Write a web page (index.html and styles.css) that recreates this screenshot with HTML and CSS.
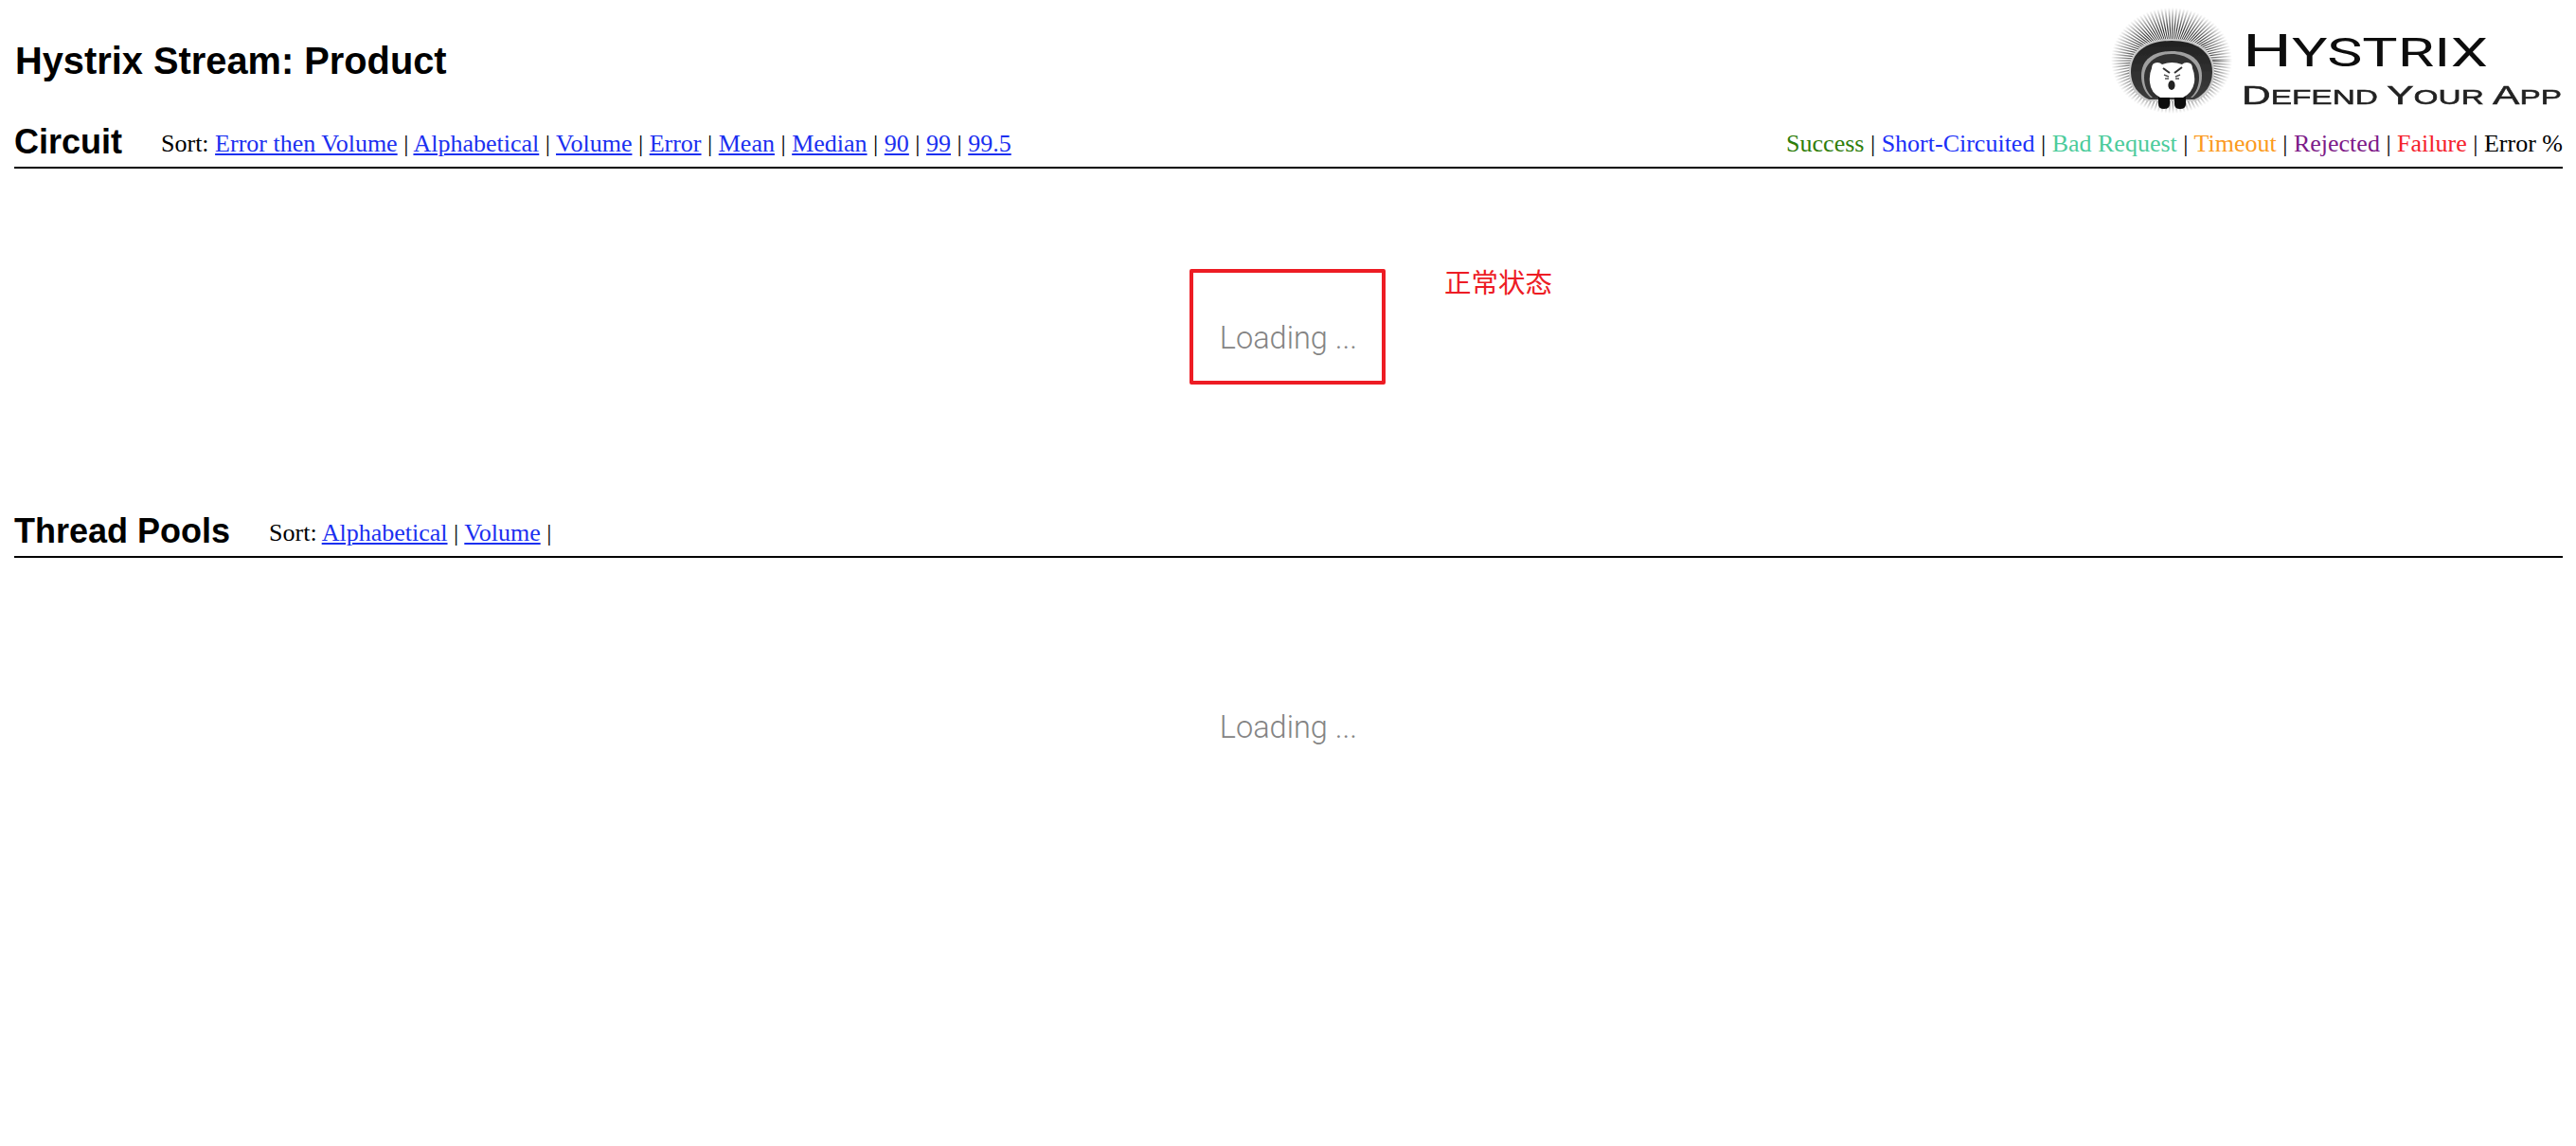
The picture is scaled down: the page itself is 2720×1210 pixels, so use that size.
FILE: index.html
```html
<!DOCTYPE html>
<html lang="en">
<head>
<meta charset="utf-8">
<title>Hystrix Stream: Product</title>
<link rel="stylesheet" href="styles.css">
</head>
<body>
<header class="page-header">
  <h1 class="title">Hystrix Stream: Product</h1>
  <svg class="logo" viewBox="2220 0 486 122" width="486" height="122" role="img" aria-label="Hystrix logo">
    <defs>
      <radialGradient id="fade" gradientUnits="userSpaceOnUse" cx="2293" cy="64" r="64">
        <stop offset="0.6" stop-color="#333"/>
        <stop offset="0.8" stop-color="#999"/>
        <stop offset="1" stop-color="#fff"/>
      </radialGradient>
      <linearGradient id="band" x1="0" y1="0" x2="0" y2="1">
        <stop offset="0" stop-color="#222"/>
        <stop offset="1" stop-color="#3c3c3c"/>
      </linearGradient>
      <filter id="soft" x="-50%" y="-50%" width="200%" height="200%"><feGaussianBlur stdDeviation="0.65"/></filter>
      <filter id="softer" x="-5%" y="-20%" width="110%" height="140%"><feGaussianBlur stdDeviation="0.45"/></filter>
    </defs>
    <g filter="url(#soft)">
      <circle class="spikes" cx="2293" cy="64" r="44" stroke="url(#fade)"/>
      <path class="ring-edge" d="M2248 76C2248 52 2266 41 2293 41S2338 52 2338 76C2338 92 2330 102 2318 107H2268C2256 102 2248 92 2248 76Z"/>
      <path class="ring-dark" d="M2250 76C2250 54 2268 43 2293 43S2336 54 2336 76C2336 90 2328 100 2317 105H2269C2258 100 2250 90 2250 76Z" fill="url(#band)"/>
      <path class="ring-mid" d="M2261 80C2261 62 2275 54 2293 54S2325 62 2325 80C2325 90 2321 98 2315 103H2271C2265 98 2261 90 2261 80Z"/>
      <path class="ring-inner" d="M2264 82C2264 66 2278 57 2293 57S2322 66 2322 82C2322 90 2319 98 2313 103H2273C2267 98 2264 90 2264 82Z"/>
      <path class="foot" d="M2279 100H2291V110Q2291 115 2285 115T2279 110ZM2296 100H2308V110Q2308 115 2302 115T2296 110Z"/>
      <path class="head" d="M2272 72Q2272 66 2278 66Q2281 66 2283 68Q2293 64 2304 68Q2306 66 2309 66Q2315 66 2315 72Q2318 79 2317 87Q2315 98 2305 103H2281Q2271 98 2270 87Q2269 79 2272 72Z"/>
      <path class="brow" d="M2284 72L2291 77M2304 71L2296 77"/>
      <path class="eye" d="M2285 79L2290 81M2302 79L2297 81M2286 83L2290 83M2301 83L2297 83"/>
      <ellipse class="mouth" cx="2293" cy="90" rx="3.6" ry="5"/>
    </g>
    <g filter="url(#softer)">
      <text class="logo-name" x="2368" y="70" textLength="259" lengthAdjust="spacingAndGlyphs"><tspan class="logo-name-cap">H</tspan>YSTRIX</text>
      <text class="logo-tag" x="2367" y="110" textLength="338" lengthAdjust="spacingAndGlyphs"><tspan class="logo-tag-cap">D</tspan>EFEND <tspan class="logo-tag-cap">Y</tspan>OUR <tspan class="logo-tag-cap">A</tspan>PP</text>
    </g>
  </svg>
</header>

<section class="section section-circuit">
  <div class="section-bar">
    <h2 class="section-title">Circuit</h2>
    <div class="sort">Sort: <a href="#">Error then Volume</a> | <a href="#">Alphabetical</a> | <a href="#">Volume</a> | <a href="#">Error</a> | <a href="#">Mean</a> | <a href="#">Median</a> | <a href="#">90</a> | <a href="#">99</a> | <a href="#">99.5</a></div>
    <div class="legend"><span class="c-success">Success</span> | <span class="c-short">Short-Circuited</span> | <span class="c-bad">Bad Request</span> | <span class="c-timeout">Timeout</span> | <span class="c-rejected">Rejected</span> | <span class="c-failure">Failure</span> | Error %</div>
  </div>
  <div class="section-body"><span class="loading">Loading ...</span></div>
  <div class="note-box"></div>
  <div class="note-text">正常状态</div>
</section>

<section class="section">
  <div class="section-bar">
    <h2 class="section-title">Thread Pools</h2>
    <div class="sort">Sort: <a href="#">Alphabetical</a> | <a href="#">Volume</a> |</div>
  </div>
  <div class="section-body"><span class="loading">Loading ...</span></div>
</section>
</body>
</html>
```

FILE: styles.css
```css
* { box-sizing: border-box; }

html, body { margin: 0; background: #fff; }

body {
  height: 1210px;
  padding: 0 14px 0 15px;
  overflow: hidden;
  font-family: "Liberation Serif", serif;
  color: #000;
}

.page-header {
  display: flex;
  justify-content: space-between;
  align-items: center;
  height: 122px;
}

.title {
  margin: 8px 0 0 1px;
  font: bold 39.8px/1 "Liberation Sans", sans-serif;
}

.logo { display: block; flex: none; }

.spikes { fill: none; stroke-width: 40; stroke-dasharray: 1.35 1.45; transform-box: fill-box; transform-origin: center; transform: scale(1, .875); }
.ring-edge { fill: #c8c8c8; }
.ring-mid { fill: #a0a0a0; }
.ring-inner { fill: #303030; }
.foot { fill: #111; }
.head { fill: #fff; }
.brow { fill: none; stroke: #333; stroke-width: 2; }
.eye { fill: none; stroke: #555; stroke-width: 1.4; }
.mouth { fill: #222; }

.logo-name, .logo-tag { fill: #111; }
.logo-name { font-family: Roboto, "Liberation Sans", sans-serif; font-weight: 400; font-size: 42px; }
.logo-name-cap { font-size: 49px; }
.logo-tag { font-family: "Liberation Sans", sans-serif; font-size: 22px; stroke-width: .5px; fill: #222; stroke: #222; }
.logo-tag-cap { font-size: 28px; }

.section { position: relative; }

.section-bar {
  display: flex;
  align-items: flex-start;
  height: 56px;
  padding-top: 6px;
  border-bottom: 2px solid #000;
  font-size: 26px;
}

.section-title {
  margin: 0 41px 0 0;
  font: bold 36px/1.2 "Liberation Sans", sans-serif;
}

.sort, .legend { margin-top: 9px; }

.sort a { color: #1b30f0; }

.legend { margin-left: auto; }

.c-success { color: #2f7d0a; }
.c-short { color: #1b30f8; }
.c-bad { color: #4ccb9b; }
.c-timeout { color: #fb9a20; }
.c-rejected { color: #7d1a88; }
.c-failure { color: #f5202c; }

.section-body {
  display: flex;
  align-items: center;
  justify-content: center;
  height: 355px;
  padding-top: 3px;
}

.loading {
  font: 300 32.5px/1 Roboto, "Liberation Sans", sans-serif;
  color: #848484;
}

.note-box {
  position: absolute;
  left: 1241px;
  top: 162px;
  width: 207px;
  height: 122px;
  border: 4px solid #ed1c24;
  border-radius: 2px;
}

.note-text {
  position: absolute;
  left: 1510px;
  top: 158px;
  font: 28.5px/1.2 "Noto Sans CJK SC", sans-serif;
  color: #ed1c24;
}
```
